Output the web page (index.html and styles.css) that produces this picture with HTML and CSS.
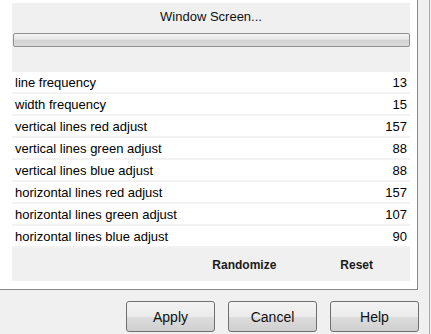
FILE: index.html
```html
<!DOCTYPE html>
<html lang="en">
<head>
  <meta charset="UTF-8" />
  <title>Window Screen</title>
  <link rel="stylesheet" href="styles.css">
</head>
<body>
  <div class="window">
    <div class="upper">
      <div class="frame">
        <div class="head">
          <div class="title">Window Screen...</div>
          <div class="bar"></div>
        </div>
        <div class="rows">
          <div class="row"><span>line frequency</span><span>13</span></div>
          <div class="row"><span>width frequency</span><span>15</span></div>
          <div class="row"><span>vertical lines red adjust</span><span>157</span></div>
          <div class="row"><span>vertical lines green adjust</span><span>88</span></div>
          <div class="row"><span>vertical lines blue adjust</span><span>88</span></div>
          <div class="row"><span>horizontal lines red adjust</span><span>157</span></div>
          <div class="row"><span>horizontal lines green adjust</span><span>107</span></div>
          <div class="row"><span>horizontal lines blue adjust</span><span>90</span></div>
        </div>
        <div class="actions">
          <span class="link">Randomize</span>
          <span class="link">Reset</span>
        </div>
      </div>
    </div>
    <div class="buttons">
      <button class="btn">Apply</button>
      <button class="btn">Cancel</button>
      <button class="btn">Help</button>
    </div>
  </div>
</body>
</html>
```

FILE: styles.css
```css
body, html {
  margin: 0;
  padding: 0;
  font-family: "Liberation Sans", Arial, sans-serif;
  background: #f0f0f0;
  overflow: hidden;
}
.window {
  width: 429px;
  height: 334px;
  border-right: 1px solid #a9a9a9;
  display: flex;
  flex-direction: column;
}
.upper {
  display: flex;
}
.frame {
  width: 398px;
  height: 286px;
  padding: 3px 7px 0 12px;
  background: #fff;
  border-right: 1px solid #898989;
  border-bottom: 1px solid #898989;
  display: flex;
  flex-direction: column;
}

.head {
  height: 69px;
  background: #f0f0f0;
  display: flex;
  flex-direction: column;
}
.title {
  font-size: 13px;
  color: #111;
  text-align: center;
  margin-top: 6px;
  line-height: 16px;
}
.bar {
  margin: 8px 0 0 1px;
  height: 12px;
  border: 1px solid #8f8f8f;
  border-radius: 2px;
  background: linear-gradient(#f6f6f6, #e4e4e4 45%, #d2d2d2 55%, #dcdcdc);
}

.rows {
  display: flex;
  flex-direction: column;
}
.row {
  height: 20px;
  border-bottom: 2px solid #f2f2f2;
  padding: 0 3px;
  display: flex;
  justify-content: space-between;
  align-items: center;
  font-size: 13px;
  color: #000;
}

.actions {
  height: 33px;
  background: #f0f0f0;
  display: flex;
  justify-content: flex-end;
  align-items: center;
  gap: 64px;
  padding-right: 37px;
}
.link {
  font-size: 12px;
  font-weight: bold;
  color: #1a1a1a;
}

.buttons {
  display: flex;
  justify-content: flex-end;
  gap: 13px;
  padding: 11px 10px 0 0;
}
.btn {
  width: 89px;
  height: 31px;
  border: 1px solid #707070;
  border-radius: 3px;
  background: linear-gradient(#f3f3f3, #ebebeb 50%, #dddddd 51%, #cfcfcf);
  font-family: "Liberation Sans", Arial, sans-serif;
  font-size: 14px;
  color: #111;
  padding: 0;
}
```
